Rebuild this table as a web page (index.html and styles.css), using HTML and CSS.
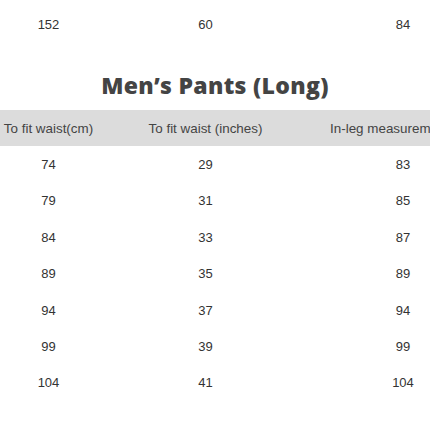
FILE: index.html
```html
<!DOCTYPE html>
<html>
<head>
<meta charset="utf-8">
<link rel="stylesheet" href="styles.css">
</head>
<body>
<div class="page">
  <table class="size-table top-table">
    <colgroup><col class="c1"><col class="c2"><col class="c3"></colgroup>
    <tbody>
      <tr><td>152</td><td>60</td><td>84</td></tr>
    </tbody>
  </table>
  <h2 class="title">Men’s Pants (Long)</h2>
  <table class="size-table">
    <colgroup><col class="c1"><col class="c2"><col class="c3"></colgroup>
    <thead>
      <tr><th>To fit waist(cm)</th><th>To fit waist (inches)</th><th>In-leg measurement(cm)</th></tr>
    </thead>
    <tbody>
      <tr><td>74</td><td>29</td><td>83</td></tr>
      <tr><td>79</td><td>31</td><td>85</td></tr>
      <tr><td>84</td><td>33</td><td>87</td></tr>
      <tr><td>89</td><td>35</td><td>89</td></tr>
      <tr><td>94</td><td>37</td><td>94</td></tr>
      <tr><td>99</td><td>39</td><td>99</td></tr>
      <tr><td>104</td><td>41</td><td>104</td></tr>
    </tbody>
  </table>
</div>
</body>
</html>
```
FILE: styles.css
```css
html, body {
  margin: 0;
  padding: 0;
  background: #fff;
  overflow: hidden;
}
.page {
  width: 430px;
  padding-top: 6px;
  font-family: "Liberation Sans", Arial, sans-serif;
  color: #333;
}
.size-table {
  border-collapse: collapse;
  table-layout: fixed;
  width: 492px;
}
.c1 { width: 97px; }
.c2 { width: 217px; }
.c3 { width: 178px; }
.size-table td,
.size-table th {
  padding: 0;
  height: 36.4px;
  text-align: center;
  font-size: 13px;
  font-weight: normal;
  white-space: nowrap;
}
.size-table th {
  background: #dcdcdc;
  color: #444;
  height: 36px;
  font-size: 13.4px;
}
.title {
  margin: 0;
  padding-top: 28px;
  padding-bottom: 10px;
  line-height: 30px;
  text-align: center;
  font-family: "Open Sans", sans-serif;
  font-weight: 800;
  font-size: 23px;
  letter-spacing: 0.3px;
  color: #444;
}
```
